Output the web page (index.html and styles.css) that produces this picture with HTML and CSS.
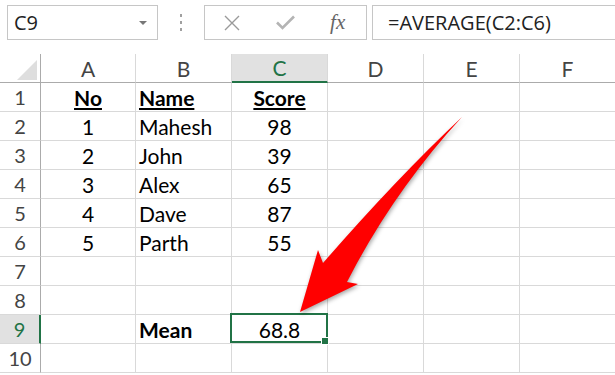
FILE: index.html
```html
<!DOCTYPE html>
<html lang="en">
<head>
  <meta charset="UTF-8" />
  <meta name="viewport" content="width=device-width, initial-scale=1.0" />
  <title>AVERAGE in Excel</title>
  <link rel="stylesheet" href="styles.css">
</head>
<body>
  <div class="toolbar">
    <div class="name-box"><span>C9</span><span class="drop"></span></div>
    <div class="grip"><i></i><i></i><i></i></div>
    <div class="buttons">
      <svg width="16" height="16" viewBox="0 0 16 16"><path d="M1 1 L15 15 M15 1 L1 15" stroke="#9a9a9a" stroke-width="1.4" fill="none"/></svg>
      <svg width="19" height="15" viewBox="0 0 19 15"><path d="M1 7.5 L6.5 13 L18 1.5" stroke="#b4b4b4" stroke-width="2.6" fill="none"/></svg>
      <span class="fx">fx</span>
    </div>
    <div class="formula">=AVERAGE(C2:C6)</div>
  </div>

  <div class="sheet">
    <div class="cell head corner"><span></span></div>
    <div class="cell head">A</div>
    <div class="cell head">B</div>
    <div class="cell head active-col">C</div>
    <div class="cell head">D</div>
    <div class="cell head">E</div>
    <div class="cell head">F</div>

    <div class="cell row-head">1</div>
    <div class="cell center title">No</div>
    <div class="cell title">Name</div>
    <div class="cell center title">Score</div>
    <div class="cell"></div><div class="cell"></div><div class="cell"></div>

    <div class="cell row-head">2</div>
    <div class="cell center">1</div>
    <div class="cell">Mahesh</div>
    <div class="cell center">98</div>
    <div class="cell"></div><div class="cell"></div><div class="cell"></div>

    <div class="cell row-head">3</div>
    <div class="cell center">2</div>
    <div class="cell">John</div>
    <div class="cell center">39</div>
    <div class="cell"></div><div class="cell"></div><div class="cell"></div>

    <div class="cell row-head">4</div>
    <div class="cell center">3</div>
    <div class="cell">Alex</div>
    <div class="cell center">65</div>
    <div class="cell"></div><div class="cell"></div><div class="cell"></div>

    <div class="cell row-head">5</div>
    <div class="cell center">4</div>
    <div class="cell">Dave</div>
    <div class="cell center">87</div>
    <div class="cell"></div><div class="cell"></div><div class="cell"></div>

    <div class="cell row-head">6</div>
    <div class="cell center">5</div>
    <div class="cell">Parth</div>
    <div class="cell center">55</div>
    <div class="cell"></div><div class="cell"></div><div class="cell"></div>

    <div class="cell row-head">7</div>
    <div class="cell"></div><div class="cell"></div><div class="cell"></div>
    <div class="cell"></div><div class="cell"></div><div class="cell"></div>

    <div class="cell row-head">8</div>
    <div class="cell"></div><div class="cell"></div><div class="cell"></div>
    <div class="cell"></div><div class="cell"></div><div class="cell"></div>

    <div class="cell row-head active-row">9</div>
    <div class="cell"></div>
    <div class="cell bold">Mean</div>
    <div class="cell center selected">68.8<span class="handle"></span></div>
    <div class="cell"></div><div class="cell"></div><div class="cell"></div>

    <div class="cell row-head">10</div>
    <div class="cell"></div><div class="cell"></div><div class="cell"></div>
    <div class="cell"></div><div class="cell"></div><div class="cell"></div>
  </div>

  <svg class="arrow" width="615" height="375" viewBox="0 0 615 375">
    <path d="M462 117 Q393 192 347 282 L358 284 L300 312 L318 250 L323 263 Q397 178 462 117 Z" fill="#ff0000"/>
  </svg>
</body>
</html>
```

FILE: styles.css
```css
body {
  margin: 0;
  width: 615px;
  height: 375px;
  overflow: hidden;
  position: relative;
  background: #fff;
  font-family: Lato, "Liberation Sans", sans-serif;
}
.toolbar {
  display: flex;
  height: 35px;
  padding: 5px 0 0 7px;
  margin-bottom: 14px;
  font-family: "Open Sans", "Liberation Sans", sans-serif;
  font-size: 20px;
  color: #222;
}
.name-box {
  width: 151px;
  box-sizing: border-box;
  border: 1px solid #c6c6c6;
  display: flex;
  align-items: center;
  justify-content: space-between;
  padding: 0 10px 0 6px;
}
.drop {
  width: 0;
  height: 0;
  border-left: 4px solid transparent;
  border-right: 4px solid transparent;
  border-top: 4px solid #777;
}
.grip {
  width: 46px;
  display: flex;
  flex-direction: column;
  align-items: center;
  justify-content: center;
  gap: 4px;
}
.grip i {
  display: block;
  width: 2px;
  height: 3px;
  background: #a0a0a0;
}
.buttons {
  width: 163px;
  box-sizing: border-box;
  border: 1px solid #c6c6c6;
  display: grid;
  grid-template-columns: repeat(3, 1fr);
  align-items: center;
  justify-items: center;
  margin-right: 5px;
}
.fx {
  font-family: "Liberation Serif", serif;
  font-style: italic;
  font-size: 21px;
  color: #666;
  margin-left: -3px;
}
.formula {
  flex: 1;
  border: 1px solid #c6c6c6;
  border-right: none;
  display: flex;
  align-items: center;
  padding-left: 15px;
}
.sheet {
  display: grid;
  grid-template-columns: 41px 95px repeat(5, 96px);
  grid-auto-rows: 29px;
}
.cell {
  box-sizing: border-box;
  border-right: 1px solid #d9d9d9;
  border-bottom: 1px solid #d9d9d9;
  display: flex;
  align-items: center;
  padding: 0 3px;
  font-size: 21px;
  color: #000;
  white-space: nowrap;
}
.center {
  justify-content: center;
}
.title {
  font-weight: bold;
  text-decoration: underline;
  text-underline-offset: 2px;
}
.bold {
  font-weight: bold;
}
.head {
  justify-content: center;
  color: #444;
  border-bottom-color: #ababab;
}
.corner {
  align-items: flex-end;
  justify-content: flex-end;
  padding: 0 3px 2px 0;
  border-right-color: #ababab;
}
.corner span {
  width: 0;
  height: 0;
  border-left: 20px solid transparent;
  border-bottom: 20px solid #dedede;
}
.row-head {
  justify-content: center;
  color: #444;
  border-right-color: #ababab;
  font-size: 20px;
}
.active-col {
  background: #e1e1e1;
  color: #217346;
  border-bottom: 2px solid #217346;
}
.active-row {
  background: #e1e1e1;
  color: #217346;
  border-right: 2px solid #217346;
}
.selected {
  position: relative;
}
.selected::after {
  content: "";
  position: absolute;
  top: -2px;
  left: -2px;
  right: -1px;
  bottom: 0;
  border: 2px solid #217346;
}
.handle {
  position: absolute;
  right: -2px;
  bottom: -2px;
  width: 6px;
  height: 6px;
  background: #217346;
  border: 1px solid #fff;
  z-index: 1;
}
.arrow {
  position: absolute;
  top: 0;
  left: 0;
  pointer-events: none;
  filter: drop-shadow(1px 2px 2px rgba(0, 0, 0, 0.35));
}
```
